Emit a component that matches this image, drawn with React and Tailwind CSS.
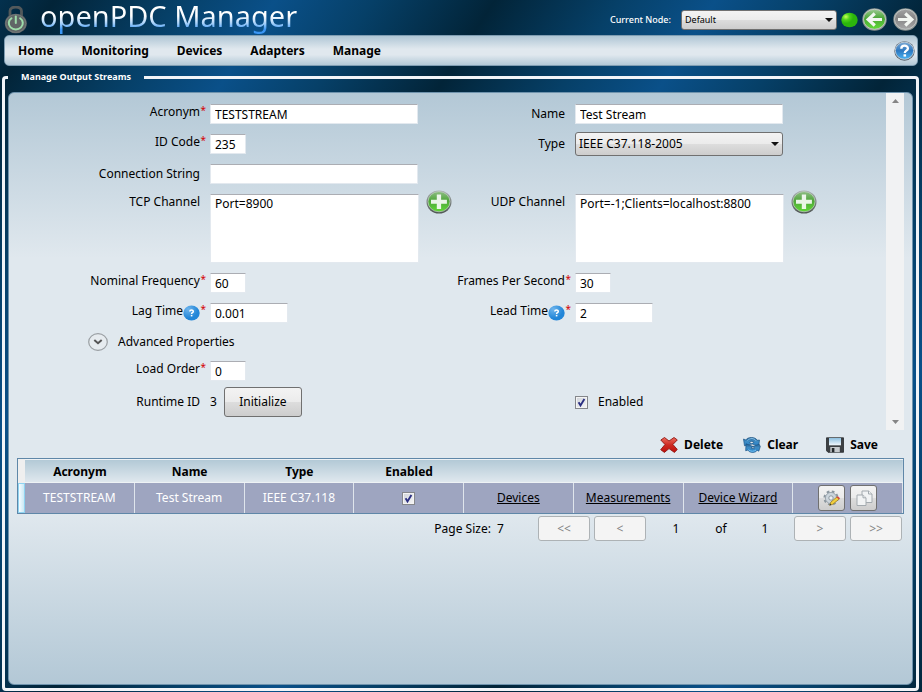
import React from "react";

const inputClass =
  "h-5 min-w-0 rounded-none border border-[#e3e9ef] border-t-[#abadb3] bg-white px-1 text-xs leading-4 text-black outline-none";
const shortInput = inputClass + " w-9";
const mediumInput = inputClass + " w-[78px]";
const wideInput = inputClass + " w-full";
const silver =
  "bg-[linear-gradient(to_bottom,#f3f3f3_0%,#ebebeb_50%,#dddddd_50%,#cdcdcd_100%)] border border-[#707070]";

function Label({ htmlFor, children, required, help, top }) {
  return (
    <div
      className={
        "flex justify-end text-xs leading-4 text-black " +
        (required || top ? "items-start" : "items-center")
      }
    >
      <label htmlFor={htmlFor} className="whitespace-nowrap">
        {children}
      </label>
      {help && (
        <button type="button" aria-label={"About " + children} className="mt-0.5 shrink-0">
          <HelpDot />
        </button>
      )}
      <span className="w-1.5 shrink-0 text-right text-[10px] leading-3 text-[#d40000]">
        {required ? "*" : ""}
      </span>
    </div>
  );
}

function HelpDot() {
  return (
    <svg width="17" height="16" viewBox="0 0 17 16" className="block">
      <defs>
        <radialGradient id="helpDot" cx="0.3" cy="0.25" r="0.6">
          <stop offset="0" stopColor="#6db4ec" />
          <stop offset="1" stopColor="#2286d8" />
        </radialGradient>
      </defs>
      <ellipse cx="8.5" cy="8" rx="8.2" ry="7.6" fill="url(#helpDot)" />
      <path d="M6.8 6.6c0-2.2 3.500-2.100 3.500-.2 0 1.300-1.700 1.300-1.700 2.500" fill="none" stroke="#fff" strokeWidth="1.500" />
      <rect x="7.800" y="9.900" width="1.600" height="1.500" fill="#fff" />
    </svg>
  );
}

function AddButton({ label }) {
  return (
    <button type="button" aria-label={label} className="-mt-1 w-[26px] shrink-0 self-start">
      <svg width="26" height="24" viewBox="0 0 26 24" className="block">
        <defs>
          <linearGradient id="addGreen" x1="0" y1="0" x2="0" y2="1">
            <stop offset="0" stopColor="#8fbd85" />
            <stop offset="0.45" stopColor="#4fa63a" />
            <stop offset="1" stopColor="#5fd835" />
          </linearGradient>
          <linearGradient id="addRim" x1="0" y1="0" x2="0" y2="1">
            <stop offset="0" stopColor="#a9b0b0" />
            <stop offset="1" stopColor="#4e5552" />
          </linearGradient>
        </defs>
        <ellipse cx="13" cy="12" rx="12.500" ry="11.500" fill="url(#addRim)" />
        <ellipse cx="13" cy="11.700" rx="11" ry="10.100" fill="url(#addGreen)" stroke="#c3d3c4" strokeWidth="0.700" />
        <path d="M10.800 4.500h4.300v5.300h5.800v3.900h-5.800v5.300h-4.300v-5.300H5V9.800h5.800z" fill="#fff" fillOpacity="0.880" />
      </svg>
    </button>
  );
}

function Dropdown({ id, label, children, className }) {
  return (
    <div className={"relative " + className}>
      <select
        id={id}
        aria-label={label}
        className={"h-full w-full appearance-none rounded-[3px] pl-[3px] pr-5 text-black outline-none " + silver}
      >
        {children}
      </select>
      <svg width="8" height="5" viewBox="0 0 8 5" className="pointer-events-none absolute top-1/2 right-1 -translate-y-1/2">
        <path d="M0 .5h8L4 4.500z" fill="#111" />
      </svg>
    </div>
  );
}

function Tick({ id, label }) {
  return (
    <span className="inline-grid size-[13px] align-middle">
      <input
        id={id}
        type="checkbox"
        defaultChecked
        aria-label={label}
        className="peer col-start-1 row-start-1 size-[13px] appearance-none border border-[#85878b] bg-[linear-gradient(135deg,#cfd3da,#f7f7f7)] shadow-[inset_0_0_0_1px_#f4f4f4]"
      />
      <svg viewBox="0 0 13 13" className="pointer-events-none invisible col-start-1 row-start-1 size-[13px] peer-checked:visible">
        <path d="M3.600 6.200L5.500 9.400L9.400 3" fill="none" stroke="#2b2f82" strokeWidth="1.900" />
      </svg>
    </span>
  );
}

function LockLogo() {
  return (
    <svg width="24" height="28" viewBox="0 0 24 28" className="mt-1.5 block shrink-0">
      <path d="M6 12V5C6-.3 17.500-.3 17.500 5v7" fill="none" stroke="#53595b" strokeWidth="2.800" />
      <ellipse cx="11.800" cy="17.500" rx="11" ry="9.800" fill="#606566" />
      <ellipse cx="11.800" cy="17.500" rx="10" ry="8.900" fill="none" stroke="#74797a" strokeWidth="1" />
      <path d="M7.500 12.300a7 6.200 0 1 0 8.600 0" fill="none" stroke="#9ddcaa" strokeWidth="2" strokeLinecap="round" />
      <path d="M11.800 10.500v6.500" stroke="#9ddcaa" strokeWidth="2" strokeLinecap="round" />
    </svg>
  );
}

function ArrowDisc({ kind }) {
  const green = kind === "back";
  const gid = green ? "discGreen" : "discGrey";
  return (
    <svg width="25" height="23" viewBox="0 0 25 23" className="block">
      <defs>
        <linearGradient id={gid} x1="0" y1="0" x2="0" y2="1">
          <stop offset="0" stopColor={green ? "#9cc993" : "#a2a2a2"} />
          <stop offset="0.450" stopColor={green ? "#4aa535" : "#858585"} />
          <stop offset="1" stopColor={green ? "#62dc3a" : "#a8a8a8"} />
        </linearGradient>
      </defs>
      <ellipse cx="12.500" cy="11.500" rx="12.200" ry="11.200" fill="#8b9290" />
      <ellipse cx="12.500" cy="11.300" rx="11" ry="10" fill={"url(#" + gid + ")"} stroke="#c6ccca" strokeWidth="0.900" />
      <g transform={green ? undefined : "translate(25 0) scale(-1 1)"}>
        <path d="M20 11.500H6.500M12.800 5.500L6.200 11.500L12.800 17.500" fill="none" stroke="#f2f6f1" strokeWidth="3.200" />
      </g>
    </svg>
  );
}

function StatusBall() {
  return (
    <svg width="17" height="16" viewBox="0 0 17 16" className="block shrink-0" role="img" aria-label="Node connected">
      <defs>
        <radialGradient id="ball" cx="0.280" cy="0.280" r="0.450">
          <stop offset="0" stopColor="#c8ff5a" />
          <stop offset="0.500" stopColor="#4fd31a" />
          <stop offset="1" stopColor="#2cb50c" />
        </radialGradient>
      </defs>
      <ellipse cx="8.500" cy="8" rx="8.200" ry="7.300" fill="url(#ball)" />
    </svg>
  );
}

function HelpDisc() {
  return (
    <svg width="21" height="20" viewBox="0 0 21 20" className="block">
      <defs>
        <linearGradient id="helpBlue" x1="0" y1="0" x2="0" y2="1">
          <stop offset="0" stopColor="#7ca9d4" />
          <stop offset="0.500" stopColor="#2d78c0" />
          <stop offset="1" stopColor="#4ab4f4" />
        </linearGradient>
      </defs>
      <ellipse cx="10.500" cy="10" rx="10.200" ry="9.700" fill="#56616c" />
      <ellipse cx="10.500" cy="9.700" rx="9.200" ry="8.600" fill="url(#helpBlue)" stroke="#c5d0da" strokeWidth="0.900" />
      <path d="M7.300 7.700c0-4 6.600-3.900 6.600-.3 0 2.300-3.100 2.200-3.100 4.600" fill="none" stroke="#fff" strokeWidth="2.300" />
      <rect x="9.500" y="13.300" width="2.600" height="2.300" fill="#fff" />
    </svg>
  );
}

function DeleteIcon() {
  return (
    <svg width="18" height="16" viewBox="0 0 18 16" className="block">
      <defs>
        <linearGradient id="cross" x1="0" y1="0" x2="0" y2="1">
          <stop offset="0" stopColor="#ee6a5c" />
          <stop offset="0.500" stopColor="#cc2a22" />
          <stop offset="1" stopColor="#c0100c" />
        </linearGradient>
      </defs>
      <path
        d="M.8 3L4.500.5 9 4 14 .5l3.300 2.400-4.400 4.600 4.400 5-2.900 2.900L9 11.600l-4.600 3.800L.7 12.700l4.300-5.200z"
        fill="url(#cross)"
        stroke="#8f1713"
        strokeWidth="0.900"
        strokeLinejoin="round"
      />
    </svg>
  );
}

function ClearIcon() {
  return (
    <svg width="18" height="16" viewBox="0 0 18 16" className="block">
      <defs>
        <linearGradient id="swirl" x1="0" y1="0" x2="0" y2="1">
          <stop offset="0" stopColor="#245f92" />
          <stop offset="0.450" stopColor="#3f8cc4" />
          <stop offset="1" stopColor="#2583cc" />
        </linearGradient>
      </defs>
      <path
        d="M.5 2l2.200.9C5-.3 12-.6 14.300 3.300L16.500 3l-.8 6.200-7-2.400 2.400-1.500C9.800 3.900 7.500 4.200 6.500 5.500L8.800 7 1.500 8.800z"
        fill="url(#swirl)"
        stroke="#1d5687"
        strokeWidth="0.700"
        strokeLinejoin="round"
      />
      <path
        d="M17.300 9.500l-1.500 4.700-1.600-.9c-2 2.900-7.200 2.900-9.500-.2l-2 .7.300-7 7.200 2.800-2.200 1.200c1.200 1 2.700 1 3.700.2l-2-1.400 6.400-2.400z"
        fill="url(#swirl)"
        stroke="#1d5687"
        strokeWidth="0.700"
        strokeLinejoin="round"
      />
      <path d="M4.500 3.500C7 .8 11 1 13 3.700" fill="none" stroke="#8cc4e8" strokeWidth="1" />
      <path d="M5.500 12.700c2 2 5.500 2 7.500.3" fill="none" stroke="#7cc6f5" strokeWidth="1" />
    </svg>
  );
}

function SaveIcon() {
  return (
    <svg width="18" height="16" viewBox="0 0 18 16" className="block">
      <defs>
        <linearGradient id="diskLabel" x1="0" y1="0" x2="0" y2="1">
          <stop offset="0" stopColor="#8ec0e0" />
          <stop offset="1" stopColor="#f2f8fc" />
        </linearGradient>
      </defs>
      <path d="M.5.8h17v14.500H2L.5 13.700z" fill="#3c4043" stroke="#26292c" strokeWidth="0.800" />
      <rect x="3" y="1" width="12" height="7.300" fill="url(#diskLabel)" />
      <rect x="4.300" y="10" width="9.500" height="5.200" fill="#c6cacd" />
      <rect x="5.800" y="11" width="2.600" height="4.200" fill="#24282b" />
    </svg>
  );
}

function GearPencilIcon() {
  return (
    <svg width="18" height="17" viewBox="0 0 18 17" className="block">
      <circle cx="8" cy="8" r="6.300" fill="none" stroke="#8b969e" strokeWidth="2.600" strokeDasharray="2.600 2.350" />
      <circle cx="8" cy="8" r="5.600" fill="#ccd5dc" stroke="#98a3ab" strokeWidth="0.900" />
      <circle cx="8" cy="8" r="2.200" fill="#eef1f3" stroke="#87929a" strokeWidth="0.900" />
      <path d="M6.700 15.300l1.200-3.300 6-5 2.400 2-6.400 5.200z" fill="#f2cf3e" stroke="#8d701b" strokeWidth="0.700" />
      <path d="M13.400 7.300l1.300-1.100 2.400 2-1.300 1.100z" fill="#d8433c" />
      <path d="M6.700 15.300l.5-1.500 1.200 1z" fill="#2d2d2d" />
    </svg>
  );
}

function CopyIcon() {
  return (
    <svg width="18" height="17" viewBox="0 0 18 17" className="block">
      <g fill="#f1f3f4" stroke="#a3aaaf" strokeWidth="1">
        <path d="M7 1h6.500L17 4v8.500H7z" />
        <path d="M13.500 1v3H17" />
        <path d="M2 5h6l3 2.800v7.700H2z" />
        <path d="M8 5v2.800h3" />
      </g>
    </svg>
  );
}

const menu = ["Home", "Monitoring", "Devices", "Adapters", "Manage"];
const actions = [
  ["Delete", DeleteIcon],
  ["Clear", ClearIcon],
  ["Save", SaveIcon],
];
const columns = ["Acronym", "Name", "Type", "Enabled", "", "", "", ""];
const cell = "border-r border-[#dfe5ec] p-0 text-center";

function PagerButton({ label, children }) {
  return (
    <button
      type="button"
      disabled
      aria-label={label}
      className="h-[25px] w-[52px] rounded-[3px] border border-[#adb2b5] bg-[#f4f4f4] text-xs leading-4 text-[#838383]"
    >
      {children}
    </button>
  );
}

export default function App() {
  return (
    <div className="flex min-h-screen flex-col bg-[repeating-linear-gradient(122.6deg,#022438_46px,#064068_150px,#0a5089_232px,#064068_314px,#022438_417px)] font-['Noto_Sans','Open_Sans',sans-serif] text-xs text-black">
      <header className="flex h-[35px] items-start justify-between px-1">
        <div className="flex items-start gap-3">
          <LockLogo />
          <h1 className="-mb-2 bg-[linear-gradient(to_bottom,#ffffff_40%,#a9d2fa_58%,#3a96f5_74%)] bg-clip-text pr-1 pb-2 text-[29px] leading-8 font-normal whitespace-nowrap text-transparent">
            openPDC Manager
          </h1>
        </div>
        <div className="flex items-center gap-1 pt-2">
          <label htmlFor="node" className="pr-1.5 text-[9px] font-medium whitespace-nowrap text-white">
            Current Node:
          </label>
          <Dropdown id="node" className="h-5 w-[156px] text-[9px]">
            <option>Default</option>
          </Dropdown>
          <StatusBall />
          <button type="button" aria-label="Back">
            <ArrowDisc kind="back" />
          </button>
          <button type="button" aria-label="Forward" className="pl-0.5">
            <ArrowDisc kind="forward" />
          </button>
        </div>
      </header>

      <nav className="mx-1 flex h-[31px] items-center justify-between rounded-[5px] border border-[#7f9db2] bg-[linear-gradient(to_bottom,#afc6d5_0%,#e0e8ee_45%,#e0e8ee_65%,#b3c9d7_100%)] pr-0.5 pl-[13px]">
        <div className="flex gap-7 text-xs font-bold">
          {menu.map((m) => (
            <a key={m} href="#">
              {m}
            </a>
          ))}
        </div>
        <button type="button" aria-label="Help">
          <HelpDisc />
        </button>
      </nav>

      <fieldset className="mt-[5px] mr-[3px] mb-px ml-0.5 min-w-0 rounded-[4px] border-[3px] border-[#f1f4f8] px-[3px] pt-[9px] pb-[3px]">
        <legend className="px-[13px] text-[9px] leading-3 font-bold text-white">Manage Output Streams</legend>

        <div className="flex min-h-[calc(100vh-99px)] flex-col rounded-[6px] border border-[#6f93ad] bg-[linear-gradient(to_bottom,#b3c8d6_0%,#e0e8ee_28%,#e0e8ee_71%,#b3c8d6_100%)] px-2">
          <div className="flex">
            <div className="min-w-0 flex-1 pt-[11px] pr-[69px] pb-[17px]">
              <div className="grid grid-cols-[189px_minmax(0,1fr)_115px_minmax(0,1fr)] gap-x-1 gap-y-2.5">
                <Label htmlFor="acronym" required>
                  Acronym
                </Label>
                <div className="flex pr-[34px]">
                  <input id="acronym" defaultValue="TESTSTREAM" className={wideInput} />
                </div>
                <Label htmlFor="name">Name</Label>
                <div className="flex pr-[34px]">
                  <input id="name" defaultValue="Test Stream" className={wideInput} />
                </div>

                <Label htmlFor="idcode" required>
                  ID Code
                </Label>
                <div className="flex">
                  <input id="idcode" defaultValue="235" className={shortInput} />
                </div>
                <Label htmlFor="type">Type</Label>
                <div className="pr-[34px]">
                  <Dropdown id="type" className="-my-0.5 h-6 text-xs">
                    <option>IEEE C37.118-2005</option>
                  </Dropdown>
                </div>

                <Label htmlFor="conn">Connection String</Label>
                <div className="col-span-3 grid grid-cols-subgrid">
                  <div className="flex pr-[34px]">
                    <input id="conn" className={wideInput} />
                  </div>
                </div>

                <Label htmlFor="tcp" top>
                  TCP Channel
                </Label>
                <div className="flex gap-[7px]">
                  <textarea id="tcp" defaultValue="Port=8900" className={inputClass + " !h-[69px] flex-1 resize-none pt-px"} />
                  <AddButton label="Build TCP channel" />
                </div>
                <Label htmlFor="udp" top>
                  UDP Channel
                </Label>
                <div className="flex gap-[7px]">
                  <textarea id="udp" defaultValue="Port=-1;Clients=localhost:8800" className={inputClass + " !h-[69px] flex-1 resize-none pt-px"} />
                  <AddButton label="Build UDP channel" />
                </div>

                <Label htmlFor="freq" required>
                  Nominal Frequency
                </Label>
                <div className="flex">
                  <input id="freq" defaultValue="60" className={shortInput} />
                </div>
                <Label htmlFor="fps" required>
                  Frames Per Second
                </Label>
                <div className="flex">
                  <input id="fps" defaultValue="30" className={shortInput} />
                </div>

                <Label htmlFor="lag" required help>
                  Lag Time
                </Label>
                <div className="flex">
                  <input id="lag" defaultValue="0.001" className={mediumInput} />
                </div>
                <Label htmlFor="lead" required help>
                  Lead Time
                </Label>
                <div className="flex">
                  <input id="lead" defaultValue="2" className={mediumInput} />
                </div>

                <button type="button" className="col-span-4 flex h-[18px] items-center gap-2.5 pl-[71px] text-left">
                  <svg width="20" height="18" viewBox="0 0 20 18" className="block">
                    <ellipse cx="10" cy="9" rx="9.300" ry="8.300" fill="#e6ebef" stroke="#9a9fa3" strokeWidth="1.200" />
                    <path d="M6.300 7l3.700 3.200L13.700 7" fill="none" stroke="#555" strokeWidth="2" />
                  </svg>
                  Advanced Properties
                </button>

                <Label htmlFor="load" required>
                  Load Order
                </Label>
                <div className="col-span-3 flex">
                  <input id="load" defaultValue="0" className={shortInput} />
                </div>

                <div className="flex items-center justify-end pr-1.5">Runtime ID</div>
                <div className="flex items-center gap-[7px]">
                  <span>3</span>
                  <button type="button" className={"-my-1 h-[30px] w-[78px] rounded-[3px] " + silver}>
                    Initialize
                  </button>
                </div>
                <div />
                <div className="flex items-center gap-2.5">
                  <Tick id="enabled" />
                  <label htmlFor="enabled">Enabled</label>
                </div>
              </div>
            </div>
            <div className="flex w-[18px] flex-col items-center justify-between bg-[#f1f2f3] py-1.5">
              <svg width="7" height="4" viewBox="0 0 7 4">
                <path d="M0 4L3.500 0L7 4z" fill="#858585" />
              </svg>
              <svg width="7" height="4" viewBox="0 0 7 4">
                <path d="M0 0h7L3.500 4z" fill="#858585" />
              </svg>
            </div>
          </div>

          <div className="flex h-7 items-center justify-end gap-5 pt-0.5 pr-[26px] font-bold">
            {actions.map(([name, Icon]) => (
              <button key={name} type="button" className="flex items-center gap-1.5 last:pl-2">
                <Icon />
                {name}
              </button>
            ))}
          </div>

          <table className="w-full table-fixed border-separate border-spacing-0 border border-[#5f87a8]">
            <colgroup>
              <col className="w-[7px]" />
              {columns.map((c, i) => (
                <col key={i} />
              ))}
            </colgroup>
            <thead>
              <tr className="h-6 bg-[linear-gradient(to_bottom,#b1c8d5,#e1e9ef)]">
                <td className="bg-[#efefef] p-0" />
                {columns.map((c, i) => (
                  <th key={i} className="border-t border-b border-[#eef2f5] p-0 pt-0.5 text-center font-bold">
                    {c}
                  </th>
                ))}
              </tr>
            </thead>
            <tbody>
              <tr className="h-[30px] bg-[#9ea5c0]">
                <td className="border border-[#8fd3f1] bg-[linear-gradient(to_right,#f6fcff,#c9e9f5)] p-0" />
                <td className={cell + " text-white"}>TESTSTREAM</td>
                <td className={cell + " text-white"}>Test Stream</td>
                <td className={cell + " text-white"}>IEEE C37.118</td>
                <td className={cell}>
                  <div className="flex justify-center">
                    <Tick label="Stream enabled" />
                  </div>
                </td>
                {["Devices", "Measurements", "Device Wizard"].map((t) => (
                  <td key={t} className={cell}>
                    <a href="#" className="underline">
                      {t}
                    </a>
                  </td>
                ))}
                <td className={cell}>
                  <div className="flex justify-center gap-[5px]">
                    <button type="button" aria-label="Update configuration" className={"grid h-[26px] w-[27px] place-items-center rounded-[3px] " + silver}>
                      <GearPencilIcon />
                    </button>
                    <button type="button" aria-label="Copy stream" className={"grid h-[26px] w-[27px] place-items-center rounded-[3px] " + silver}>
                      <CopyIcon />
                    </button>
                  </div>
                </td>
              </tr>
            </tbody>
          </table>

          <div className="flex items-center justify-end gap-1 pt-0.5 pr-0.5">
            <span className="pr-[30px]">Page Size:&nbsp; 7</span>
            <PagerButton label="First page">&lt;&lt;</PagerButton>
            <PagerButton label="Previous page">&lt;</PagerButton>
            <span className="w-[52px] text-center">1</span>
            <span className="w-[30px] text-center">of</span>
            <span className="w-[50px] text-center">1</span>
            <PagerButton label="Next page">&gt;</PagerButton>
            <PagerButton label="Last page">&gt;&gt;</PagerButton>
          </div>
        </div>
      </fieldset>
    </div>
  );
}
